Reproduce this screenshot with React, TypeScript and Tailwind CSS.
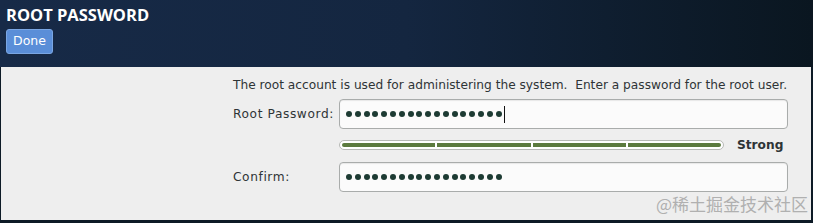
import React from "react";

const Dots = ({ n }: { n: number }) => (
  <div className="flex items-center gap-[2.8px]">
    {Array.from({ length: n }).map((_, i) => (
      <span key={i} className="block w-[6px] h-[6px] rounded-full bg-[#1d3b33]" />
    ))}
  </div>
);

export default function App() {
  return (
    <div className="w-[813px] h-[223px] bg-[#0d1a26] flex flex-col font-['DejaVu_Sans',sans-serif] overflow-hidden">
      <div className="h-[67px] bg-gradient-to-r from-[#172a47] via-[#142640] to-[#0a1620] px-[6px] pt-[5px] flex flex-col items-start">
        <div className="text-white font-bold text-[16.5px] leading-[20px] font-['Open_Sans',sans-serif]">ROOT PASSWORD</div>
        <button className="mt-[4px] h-[25px] px-[6px] rounded-[3px] bg-[#5a8ed8] border border-[#7aa6e3] text-white text-[12.5px] leading-none">
          Done
        </button>
      </div>
      <div className="relative flex-1 mx-[1px] mr-[2px] mb-[3px] bg-[#eeeeee] flex flex-col pl-[232px] pt-[11px] text-[#2e3436]">
        <div className="text-[12.2px] leading-[15px] h-[18px] whitespace-nowrap">
          The root account is used for administering the system.&nbsp; Enter a password for the root user.
        </div>
        <div className="flex items-center mt-[3px]">
          <div className="w-[106px] text-[12.2px] tracking-[0.6px]">Root Password:</div>
          <div className="w-[449px] h-[30px] rounded-[4px] border border-[#a9acab] bg-[#fbfbfb] flex items-center pl-[6px] shadow-[inset_0_1px_1px_rgba(0,0,0,0.08)]">
            <Dots n={18} />
            <span className="ml-[2px] block w-[1px] h-[17px] bg-[#111]" />
          </div>
        </div>
        <div className="flex items-center mt-[7px] ml-[106px]">
          <div className="w-[385px] h-[10px] rounded-[5px] border border-[#b7b9b6] bg-white p-[2px] flex gap-[2px]">
            <div className="flex-1 bg-[#5b7a3e] rounded-l-[2px]" />
            <div className="flex-1 bg-[#5b7a3e]" />
            <div className="flex-1 bg-[#5b7a3e]" />
            <div className="flex-1 bg-[#5b7a3e] rounded-r-[2px]" />
          </div>
          <div className="ml-[13px] text-[12.2px] font-bold text-[#2e3436]">Strong</div>
        </div>
        <div className="flex items-center mt-[8px]">
          <div className="w-[106px] text-[12.2px] tracking-[0.6px]">Confirm:</div>
          <div className="w-[449px] h-[30px] rounded-[4px] border border-[#a9acab] bg-[#fbfbfb] flex items-center pl-[6px] shadow-[inset_0_1px_1px_rgba(0,0,0,0.08)]">
            <Dots n={18} />
          </div>
        </div>
        <div className="absolute right-[3px] bottom-[6px] text-[17px] leading-[20px] text-[#b0b0b0] font-['Noto_Sans_CJK_SC',serif]">
          @稀土掘金技术社区
        </div>
      </div>
    </div>
  );
}
